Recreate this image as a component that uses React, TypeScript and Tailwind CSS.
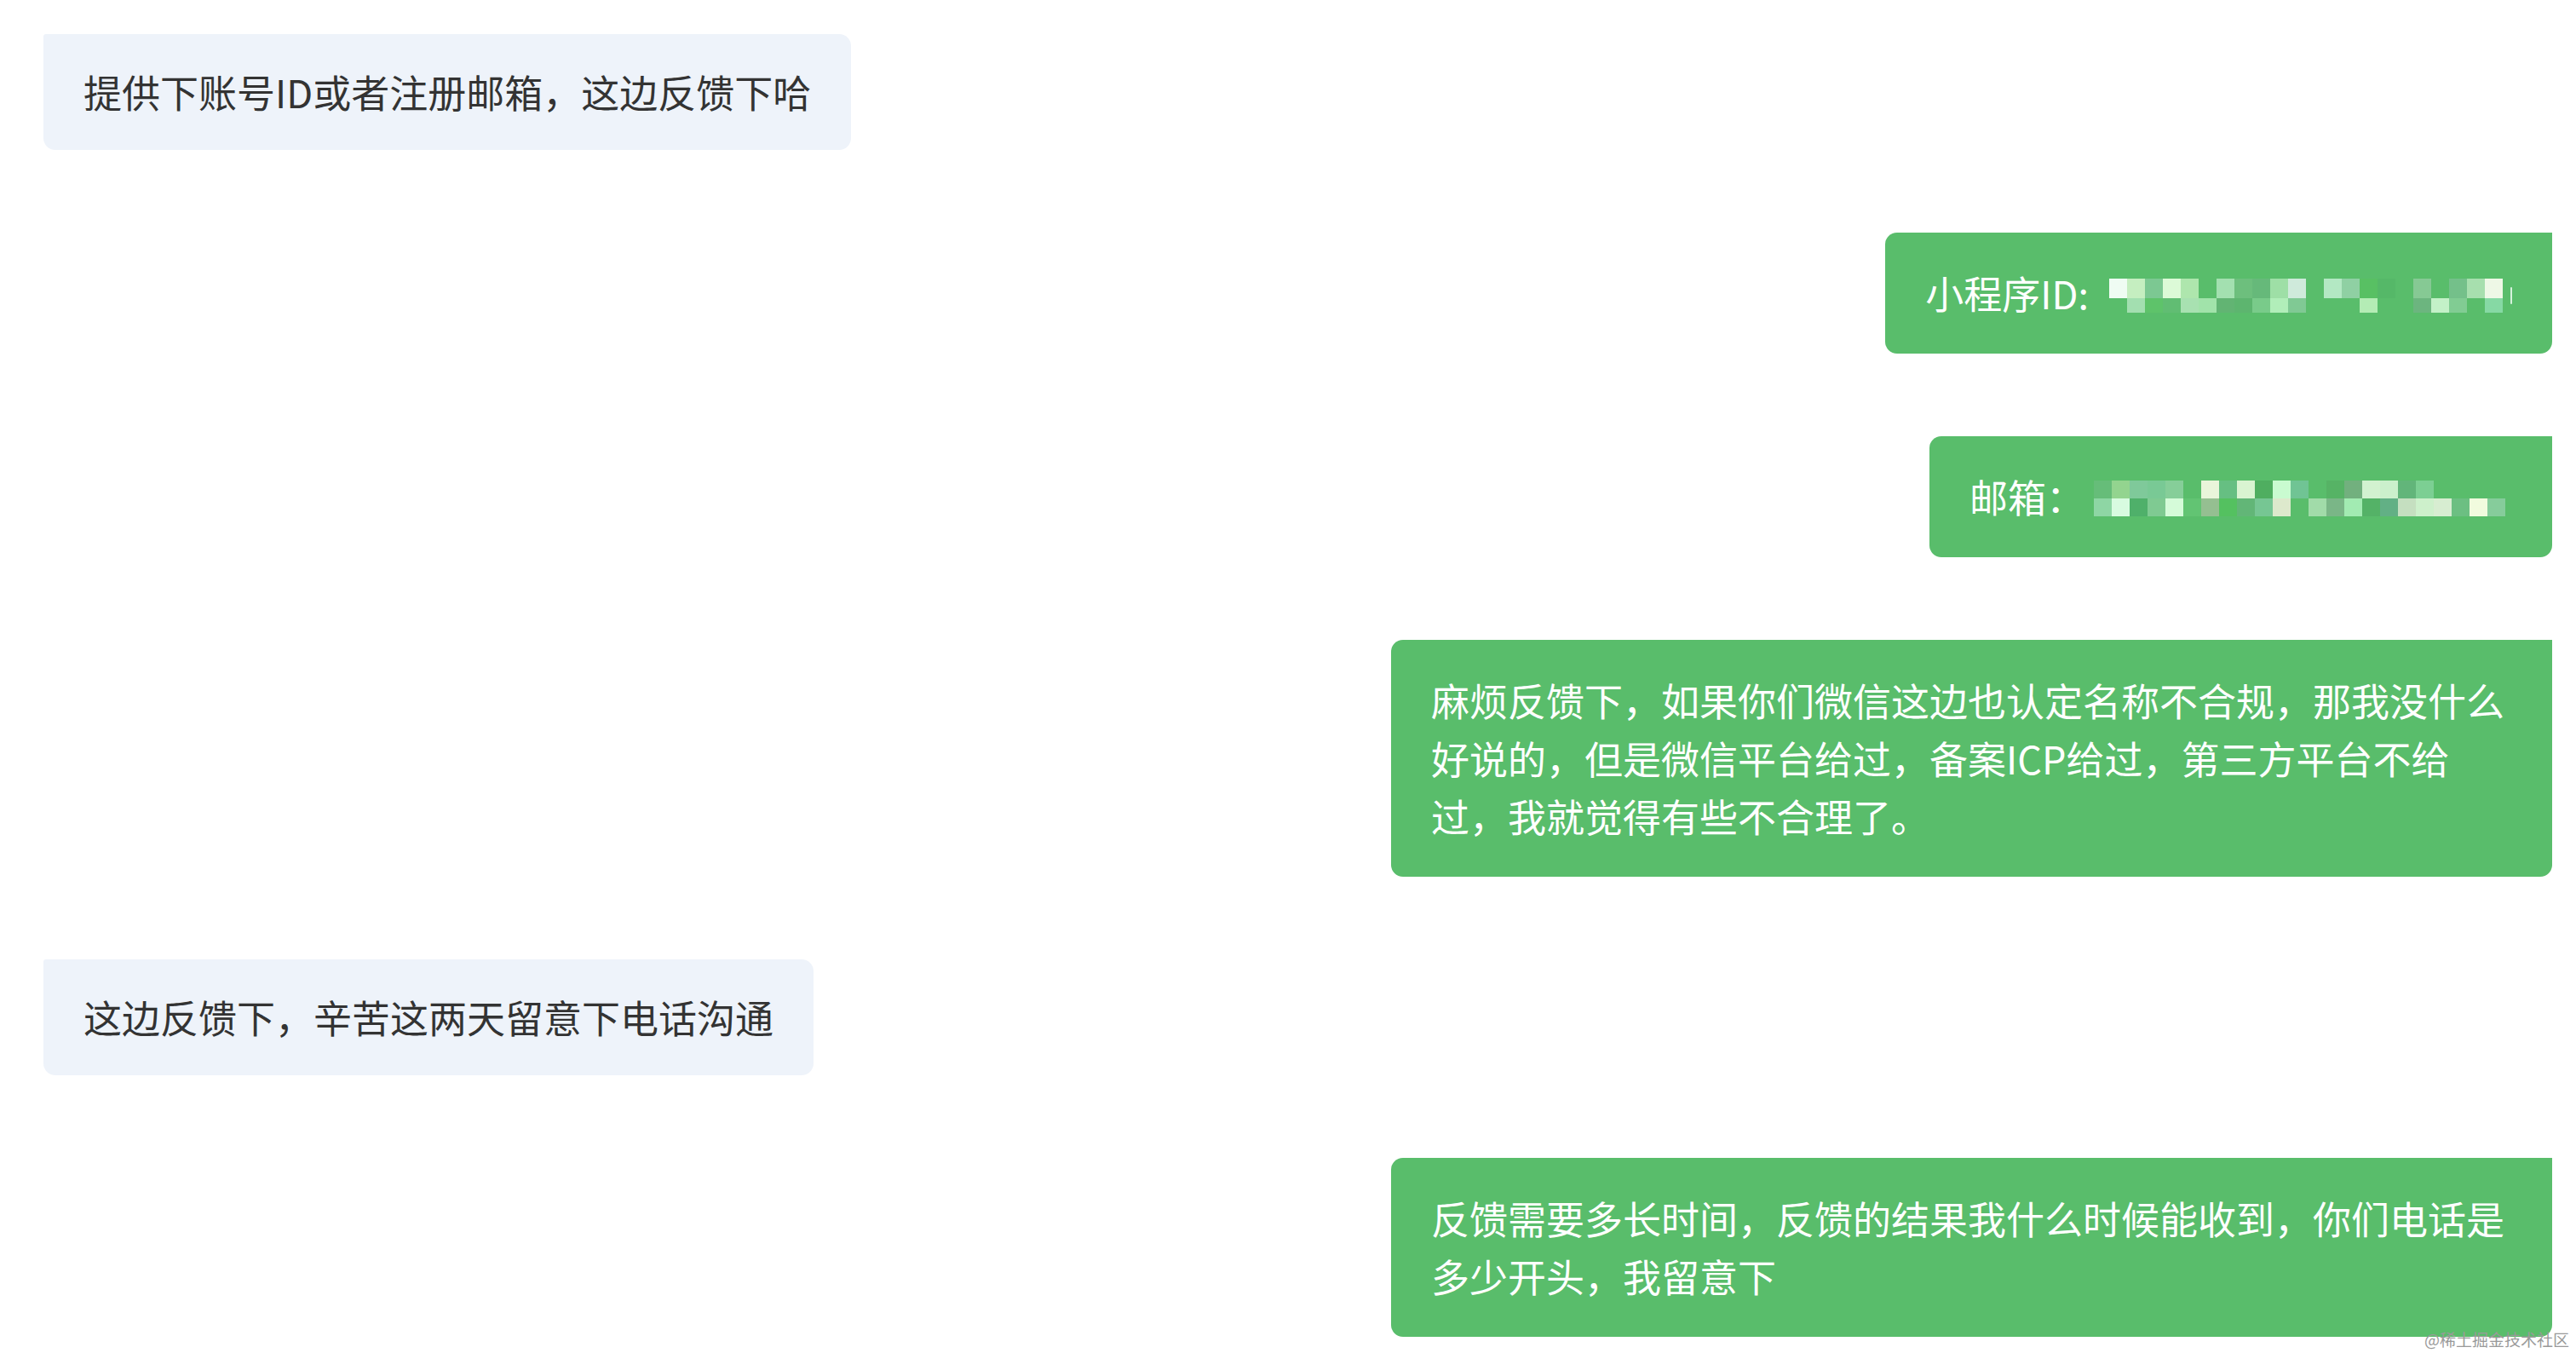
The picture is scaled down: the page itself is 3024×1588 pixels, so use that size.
import React from "react";

const idRows = [
  ["bg-[#effcf3]", "bg-[#c5eec0]", "bg-[#7cc892]", "bg-[#dcfad7]", "bg-[#aee6ad]", "", "bg-[#a3e0b0]", "bg-[#6dbf7d]", "bg-[#66b97a]", "bg-[#9edfa6]", "bg-[#cfeadb]", "", "bg-[#b3e8c3]", "bg-[#8fd0a3]", "bg-[#58c063]", "bg-[#55b868]", "", "bg-[#86c994]", "", "bg-[#74c08a]", "bg-[#a7dfae]", "bg-[#eef8e6]"],
  ["", "bg-[#a3dfb0]", "bg-[#5ec36a]", "bg-[#61bd73]", "bg-[#a8e1b1]", "bg-[#a1e3aa]", "bg-[#62b473]", "bg-[#5db56f]", "bg-[#79cb8a]", "bg-[#b1eeb9]", "bg-[#80c994]", "", "", "", "bg-[#b4ecb5]", "", "", "bg-[#6cb57f]", "bg-[#c3f1c8]", "bg-[#81cc93]", "", "bg-[#86d9a4]"],
];

const mailRows = [
  ["bg-[#66bd79]", "bg-[#93d48f]", "bg-[#7fc99a]", "bg-[#79c995]", "bg-[#86ce99]", "", "bg-[#e9f5da]", "bg-[#66bf82]", "bg-[#d9f4d1]", "bg-[#4fae60]", "bg-[#c9fbd0]", "bg-[#70c494]", "", "bg-[#56b365]", "bg-[#72b07e]", "bg-[#d2f2d0]", "bg-[#cbf0cc]", "bg-[#62b57a]", "bg-[#7ccf93]", "", "", "", ""],
  ["bg-[#8ed6a4]", "bg-[#d8fbe0]", "bg-[#4fb06a]", "bg-[#7fca92]", "bg-[#d5fbd9]", "bg-[#62c473]", "bg-[#95bf91]", "bg-[#54c160]", "bg-[#62b677]", "bg-[#76c693]", "bg-[#dde9cc]", "", "bg-[#a1dba9]", "bg-[#7ab687]", "bg-[#a2ebb2]", "bg-[#54b267]", "bg-[#62b085]", "bg-[#c5dfc0]", "bg-[#cdf0cb]", "bg-[#d7edd1]", "bg-[#6cbf82]", "bg-[#f1fbde]", "bg-[#86cc9b]"],
];

function Mosaic({ rows, heights }: { rows: string[][]; heights: string[] }) {
  return (
    <div className="flex flex-col blur-[0.6px]">
      {rows.map((row, i) => (
        <div key={i} className={"flex " + heights[i]}>
          {row.map((c, j) => (
            <span key={j} className={"w-[21px] h-full " + c} />
          ))}
        </div>
      ))}
    </div>
  );
}

function Left({ children }: { children: React.ReactNode }) {
  return (
    <div className="self-start bg-[#eef3fa] text-[#333333] px-[47px] py-[34px] rounded-[14px] rounded-tl-[3px]">
      {children}
    </div>
  );
}

function Right({ children }: { children: React.ReactNode }) {
  return (
    <div className="self-end max-w-[1363px] bg-[#59bd6b] text-white px-[47px] py-[37px] rounded-[14px] rounded-tr-none">
      {children}
    </div>
  );
}

export default function App() {
  return (
    <div className="relative w-[3024px] h-[1588px] bg-white overflow-hidden font-['Noto_Sans_CJK_SC',sans-serif] text-[45px] leading-[68px]">
      <div className="flex flex-col gap-[97px] pt-[40px] pl-[51px] pr-[28px]">
        <Left>提供下账号ID或者注册邮箱，这边反馈下哈</Left>

        <Right>
          <div className="flex items-center">
            <span>小程序ID:</span>
            <div className="ml-[24px] mt-[6px] flex items-center">
              <Mosaic rows={idRows} heights={["h-[23px]", "h-[17px]"]} />
              <span className="ml-[9px] w-[2px] h-[20px] bg-[#d6f2dc] rounded-full" />
            </div>
          </div>
        </Right>

        <Right>
          <div className="flex items-center">
            <span>邮箱：</span>
            <div className="ml-[11px] mt-[4px] mr-[8px]">
              <Mosaic rows={mailRows} heights={["h-[21px]", "h-[21px]"]} />
            </div>
          </div>
        </Right>

        <Right>
          麻烦反馈下，如果你们微信这边也认定名称不合规，那我没什么好说的，但是微信平台给过，备案ICP给过，第三方平台不给过，我就觉得有些不合理了。
        </Right>

        <Left>这边反馈下，辛苦这两天留意下电话沟通</Left>

        <Right>
          反馈需要多长时间，反馈的结果我什么时候能收到，你们电话是多少开头，我留意下
        </Right>
      </div>

      <div className="absolute right-[8px] bottom-[4px] text-[19px] leading-[24px] text-[#9a9a9a] font-['Noto_Sans_CJK_SC',serif]">
        @稀土掘金技术社区
      </div>
    </div>
  );
}
